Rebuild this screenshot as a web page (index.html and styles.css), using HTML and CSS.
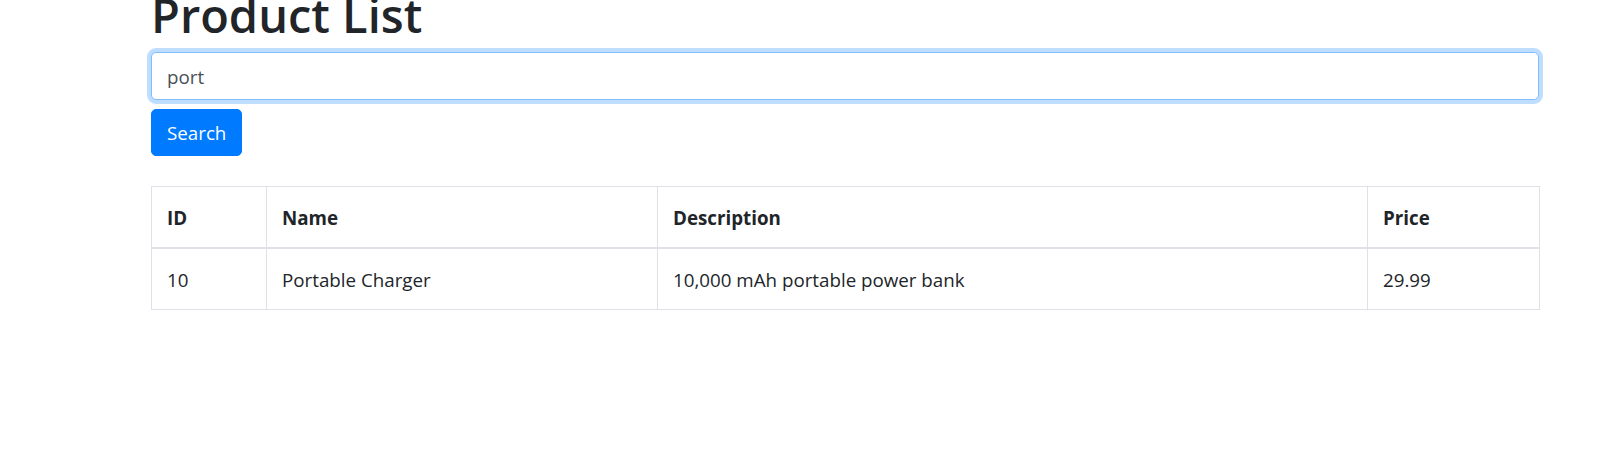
FILE: index.html
```html
<!DOCTYPE html>
<html lang="en">
<head>
<meta charset="utf-8">
<title>Product List</title>
<link rel="stylesheet" href="styles.css">
</head>
<body>
<div class="container">
  <h1 class="title">Product List</h1>
  <form class="search-form">
    <input class="search-input" type="text" value="port">
    <button class="btn-primary" type="button">Search</button>
  </form>
  <table class="table">
    <thead>
      <tr>
        <th class="col-id">ID</th>
        <th class="col-name">Name</th>
        <th class="col-desc">Description</th>
        <th class="col-price">Price</th>
      </tr>
    </thead>
    <tbody>
      <tr>
        <td>10</td>
        <td>Portable Charger</td>
        <td>10,000 mAh portable power bank</td>
        <td>29.99</td>
      </tr>
    </tbody>
  </table>
</div>
</body>
</html>
```

FILE: styles.css
```css
* { box-sizing: border-box; }

html, body {
  margin: 0;
  padding: 0;
  background: #fff;
}

body {
  font-family: "Open Sans", "Noto Sans", sans-serif;
  font-size: 18.75px;
  line-height: 30px;
  color: #212529;
  overflow: hidden;
}

.container {
  margin-left: 151px;
  width: 1388px;
}

.title {
  font-size: 47px;
  font-weight: 600;
  line-height: 60px;
  margin: -15px 0 7px 0;
  color: #212529;
}

.search-form {
  display: flex;
  flex-direction: column;
  align-items: flex-start;
  margin: 0;
}

.search-input {
  width: 100%;
  height: 47.5px;
  padding: 8.5px 15px 6.5px 15px;
  font-family: inherit;
  font-size: 18.75px;
  line-height: 30px;
  color: #495057;
  background: #fff;
  border: 1px solid #80bdff;
  border-radius: 5px;
  box-shadow: 0 0 0 4px rgba(0, 123, 255, 0.25);
  outline: none;
  margin: 0 0 9px 0;
}

.btn-primary {
  height: 47.5px;
  width: 91px;
  padding: 8.5px 15px 6.5px 15px;
  font-family: inherit;
  font-size: 18.75px;
  line-height: 30px;
  color: #fff;
  background: #007bff;
  border: 1px solid #007bff;
  border-radius: 5px;
  cursor: pointer;
}

.table {
  width: 1388px;
  margin-top: 30px;
  border-collapse: collapse;
  border: 1px solid #dee2e6;
  table-layout: fixed;
}

.table th,
.table td {
  padding: 16px 15px 14px 15px;
  border: 1px solid #dee2e6;
  text-align: left;
  vertical-align: top;
}

.table th {
  font-weight: 700;
  border-bottom: 2.5px solid #dee2e6;
}

.col-id { width: 115px; }
.col-name { width: 391px; }
.col-desc { width: 710px; }
.col-price { width: 172px; }
```
